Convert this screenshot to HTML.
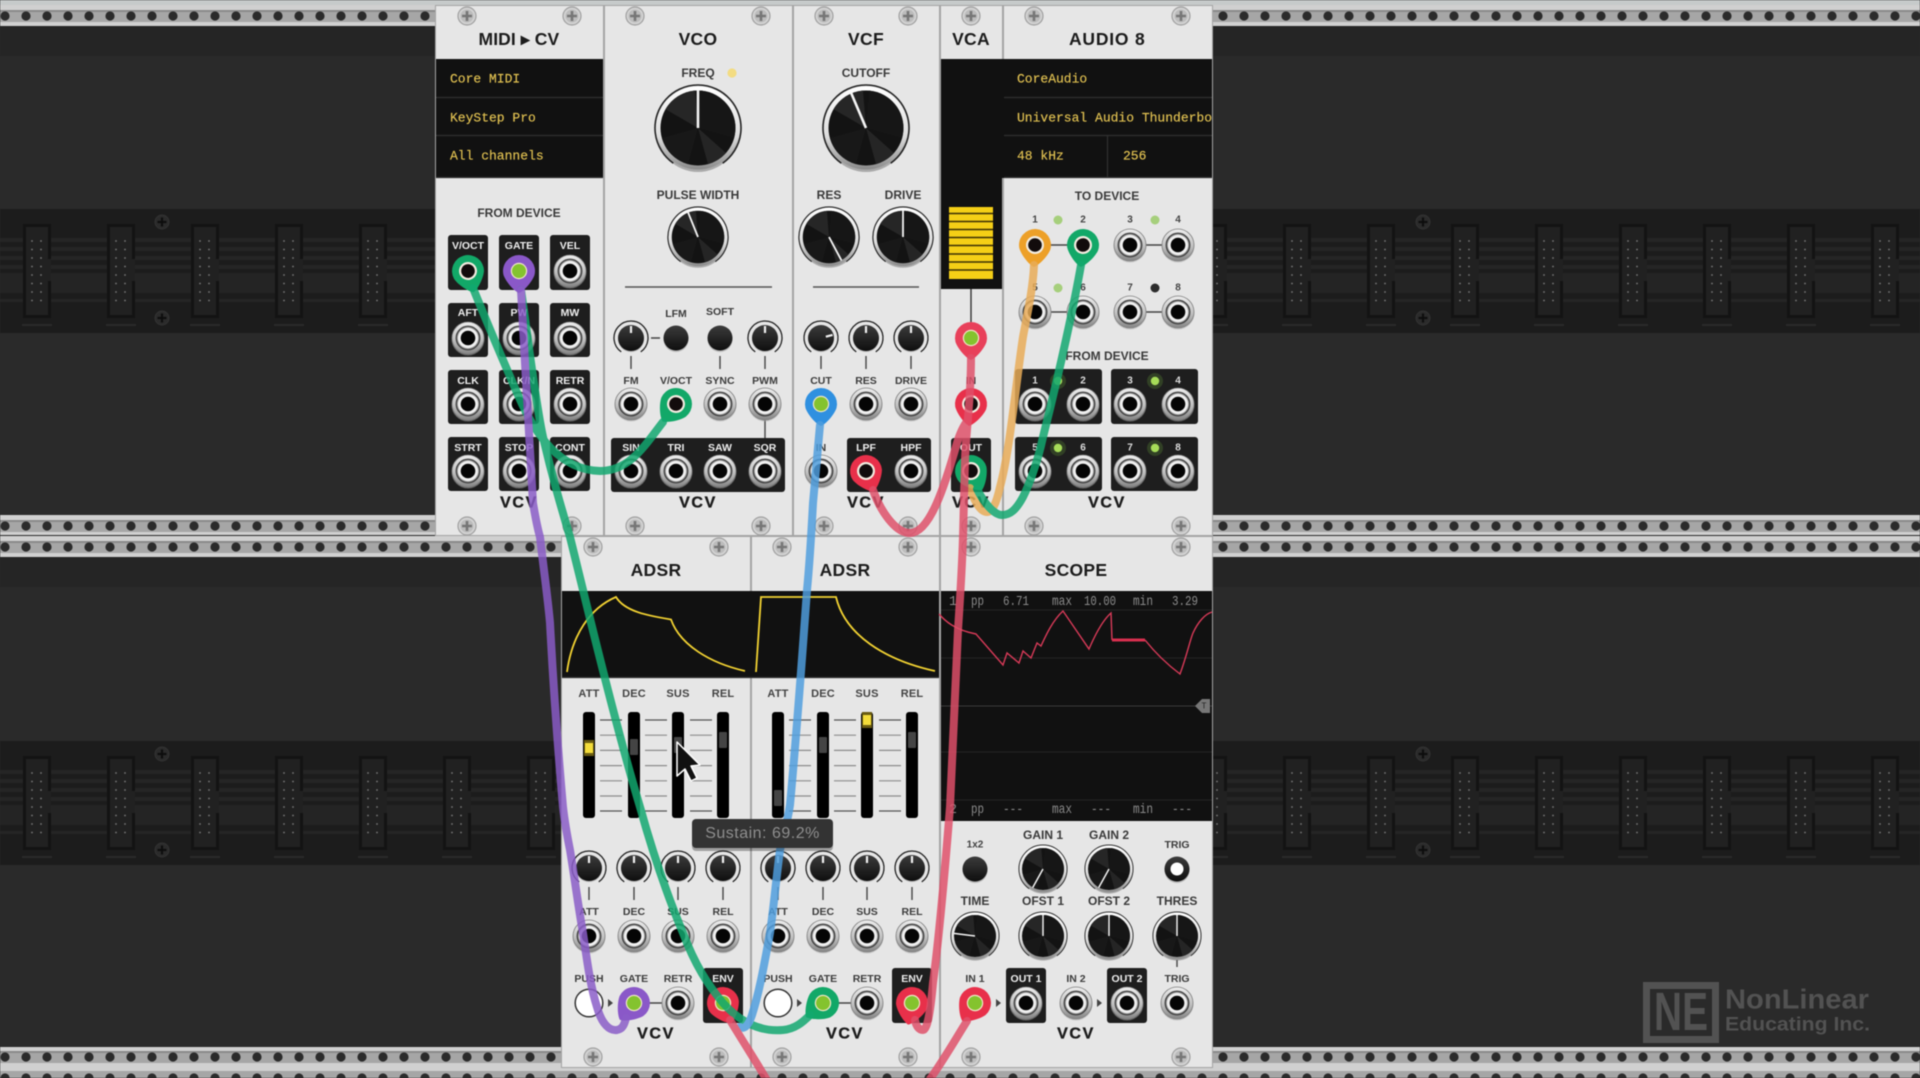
<!DOCTYPE html>
<html><head><meta charset="utf-8"><title>VCV Rack</title>
<style>
html,body{margin:0;padding:0;background:#2a2a2a;overflow:hidden}
svg{display:block;filter:blur(.45px)}
text{font-family:"Liberation Sans",sans-serif;dominant-baseline:central;text-anchor:middle}
.t{font-size:17.5px;font-weight:bold;fill:#1c1c1c;letter-spacing:.3px}
.b{font-size:12px;font-weight:bold;fill:#3a3a3a}
.l{font-size:10.5px;font-weight:bold;fill:#3c3c3c}
.a{font-size:11px;font-weight:bold;fill:#444;letter-spacing:.2px}
.w{font-size:10.5px;font-weight:bold;fill:#eee}
.n{font-size:10px;font-weight:bold;fill:#444}
.nw{font-size:10px;font-weight:bold;fill:#ddd}
.v{font-size:16px;font-weight:bold;fill:#1c1c1c;letter-spacing:1.6px;stroke:#1c1c1c;stroke-width:.35px}
.m{font-family:"Liberation Mono",monospace;font-size:13px;fill:#e2c252;stroke:#e2c252;stroke-width:.15px;text-anchor:start}
.s{font-family:"Liberation Mono",monospace;font-size:14px;fill:#8a8a8a;text-anchor:start}
.c{fill:none;stroke-width:8;stroke-linecap:round;stroke-linejoin:round}
</style></head><body>
<svg width="1920" height="1078" viewBox="0 0 1920 1078" xmlns="http://www.w3.org/2000/svg">
<defs>
<clipPath id="audioclip"><rect x="1004" y="59" width="208" height="119"/></clipPath>
<pattern id="holes" width="21" height="531" patternUnits="userSpaceOnUse"><circle cx="5" cy="16" r="4.6" fill="#2b2b2b"/><circle cx="5" cy="526" r="4.6" fill="#2b2b2b"/></pattern>
<pattern id="conn" x="0" y="209" width="84" height="124" patternUnits="userSpaceOnUse">
<rect x="23" y="15" width="28" height="94" fill="#131313"/><rect x="26" y="18" width="22" height="88" fill="#212121"/><rect x="47" y="50" width="4" height="22" fill="#212121"/><rect x="22" y="115" width="30" height="2" fill="#2a2a2a"/>
<g fill="#7c7c7c"><circle cx="32" cy="32" r=".85"/><circle cx="41" cy="32" r=".85"/><circle cx="32" cy="40.500" r=".85"/><circle cx="41" cy="40.500" r=".85"/><circle cx="32" cy="49" r=".85"/><circle cx="41" cy="49" r=".85"/><circle cx="32" cy="57.500" r=".85"/><circle cx="41" cy="57.500" r=".85"/><circle cx="32" cy="66" r=".85"/><circle cx="41" cy="66" r=".85"/><circle cx="32" cy="74.500" r=".85"/><circle cx="41" cy="74.500" r=".85"/><circle cx="32" cy="83" r=".85"/><circle cx="41" cy="83" r=".85"/><circle cx="32" cy="91.500" r=".85"/><circle cx="41" cy="91.500" r=".85"/></g>
</pattern>
<linearGradient id="gj" x1="0" y1="0" x2="0" y2="1"><stop offset="0" stop-color="#eeeeee"/><stop offset=".55" stop-color="#c0c0c0"/><stop offset="1" stop-color="#858585"/></linearGradient>
<linearGradient id="gk" x1="0" y1="0" x2="0" y2="1"><stop offset="0" stop-color="#ffffff"/><stop offset=".6" stop-color="#dddddd"/><stop offset="1" stop-color="#8a8a8a"/></linearGradient>
<linearGradient id="gb" x1="0" y1="0" x2="0" y2="1"><stop offset="0" stop-color="#3c3c3c"/><stop offset="1" stop-color="#0e0e0e"/></linearGradient>
<g id="s"><circle r="9" fill="#d2d2d2" stroke="#a0a0a0" stroke-width="1.2"/><circle r="6.5" fill="#bcbcbc"/><path d="M-5 0H5M0-5V5" stroke="#767676" stroke-width="2.6"/></g>
<g id="sd"><circle r="7" fill="#2b2b2b" stroke="#333" stroke-width="1"/><path d="M-4.500 0H4.500M0-4.500V4.500" stroke="#0e0e0e" stroke-width="2.2"/></g>
<g id="j"><circle r="16.500" cy="1" fill="#a9a9a9" opacity=".5"/><circle r="16" fill="url(#gj)" stroke="#808080" stroke-width=".8"/><circle r="11.800" fill="#8e8e8e" stroke="#3c3c3c" stroke-width="1.2"/><circle r="10.200" fill="#f0f0f0"/><circle r="7.300" fill="#050505"/></g>
<g id="k"><circle r="41" cy="3" fill="#aaa"/><path d="M-24.700 35.200A43 43 0 1 1 24.700 35.200" fill="none" stroke="#222" stroke-width="1.6"/><circle r="41.500" fill="url(#gk)"/><circle r="37.500" fill="#131313"/><path d="M0 0L-32.500-18.700A37.500 37.500 0 0 1-3-37.400Z" fill="#262626"/><path d="M0 0L28 25A37.500 37.500 0 0 1 10 36.100Z" fill="#252525"/><path d="M0 0L36 10A37.500 37.500 0 0 0 3-37.400Z" fill="#161616"/><path d="M0 0L-10 36.100A37.500 37.500 0 0 1-36 10Z" fill="#181818"/></g>
<line id="i" x1="0" y1="0" x2="0" y2="-38" stroke="#f4f4f4" stroke-width="2.6"/>
<g id="ka"><path d="M-9.750 13.900A17 17 0 1 1 9.750 13.900" fill="none" stroke="#222" stroke-width="1.3"/><circle r="13" cy="1" fill="#8f8f8f" opacity=".6"/><circle r="13" fill="url(#gb)"/></g>
<line id="ki" x1="0" y1="-5" x2="0" y2="-12" stroke="#f0f0f0" stroke-width="2.2"/>
<g id="ks"><use href="#ka"/><use href="#ki"/></g>
<g id="btn"><circle r="12.500" cy="1.500" fill="#999" opacity=".6"/><circle r="12.500" fill="url(#gb)"/></g>
<g id="ticks"><path d="M0 720H22M0 811H22" stroke="#555" stroke-width="1.3"/><path d="M0 735.200H22M0 750.400H22M0 765.600H22M0 780.800H22M0 796H22" stroke="#8c8c8c" stroke-width="1.2"/></g>
<path id="drop" d="M-15.500 4A16 16 0 1 1 15.500 4C13 11 5 20 0 22C-5 20-13 11-15.500 4Z" fill="currentColor"/>
<g id="ph"><use href="#drop"/><circle r="9" fill="#f3ece0"/><circle r="6.800" fill="#120c0c"/></g>
<g id="pl"><use href="#drop"/><circle r="8.200" fill="#f0e6c8"/><circle r="7" fill="#84c32e"/></g>
</defs>

<!-- background -->
<rect width="1920" height="1078" fill="#2a2a2a"/>
<rect y="26" width="1920" height="30" fill="#232323" opacity=".7"/>
<rect y="557" width="1920" height="30" fill="#232323" opacity=".7"/>
<g id="band"><rect y="209" width="1920" height="124" fill="#1c1c1c"/>
<rect y="238" width="1920" height="4" fill="#252525"/><rect y="247" width="1920" height="4" fill="#252525"/><rect y="256" width="1920" height="4" fill="#252525"/><rect y="265" width="1920" height="4" fill="#252525"/><rect y="273" width="1920" height="20" fill="#242424"/><rect y="299" width="1920" height="3" fill="#252525"/>
<rect y="209" width="1920" height="124" fill="url(#conn)"/></g>
<use href="#band" y="532"/>
<use href="#sd" x="162" y="222"/><use href="#sd" x="162" y="318"/><use href="#sd" x="1423" y="222"/><use href="#sd" x="1423" y="318"/>
<use href="#sd" x="162" y="754"/><use href="#sd" x="162" y="850"/><use href="#sd" x="1423" y="754"/><use href="#sd" x="1423" y="850"/>

<!-- rails -->
<g>
<rect y="0" width="1920" height="5" fill="#c6caca"/><rect y="5" width="1920" height="21" fill="#d0d0d0"/><rect y="10" width="1920" height="12" fill="#a6a6a6"/><rect y="10" width="1920" height="2" fill="#8a8a8a"/>
<rect y="515" width="1920" height="20" fill="#d0d0d0"/><rect y="520" width="1920" height="12" fill="#a6a6a6"/><rect y="520" width="1920" height="2" fill="#8a8a8a"/>
<rect y="536" width="1920" height="21" fill="#d0d0d0"/><rect y="541" width="1920" height="12" fill="#a6a6a6"/><rect y="541" width="1920" height="2" fill="#8a8a8a"/>
<rect y="1047" width="1920" height="20" fill="#d0d0d0"/><rect y="1051" width="1920" height="12" fill="#a6a6a6"/><rect y="1051" width="1920" height="2" fill="#8a8a8a"/>
<rect y="1067" width="1920" height="11" fill="#d0d0d0"/><rect y="1071" width="1920" height="7" fill="#a6a6a6"/>
<rect width="1920" height="1078" fill="url(#holes)"/>
</g>

<!-- panels -->
<rect x="435" y="5" width="778" height="531" fill="#a4a4a4"/>
<rect x="561" y="536" width="652" height="532" fill="#a4a4a4"/>
<g fill="#e6e6e6"><rect x="436" y="6" width="167" height="529"/><rect x="605" y="6" width="187" height="529"/><rect x="794" y="6" width="145" height="529"/><rect x="941" y="6" width="61" height="529"/><rect x="1004" y="6" width="208" height="529"/>
<rect x="562" y="537" width="188" height="530"/><rect x="752" y="537" width="187" height="530"/><rect x="941" y="537" width="271" height="530"/></g>

<!-- displays -->
<g fill="#111"><rect x="436" y="59" width="167" height="119"/><rect x="941" y="59" width="271" height="119"/><rect x="941" y="178" width="61" height="111"/><rect x="562" y="591" width="377" height="87"/><rect x="941" y="591" width="271" height="230"/></g>
<path d="M436 97.500H603M436 135.500H603M1004 97.500H1212M1004 135.500H1212M1107.500 135V178M436 177.500H603M1004 177.500H1212M562 677.500H939" stroke="#303030" stroke-width="1.2"/>
<text class="m" x="450" y="79">Core MIDI</text><text class="m" x="450" y="118">KeyStep Pro</text><text class="m" x="450" y="156">All channels</text>
<g clip-path="url(#audioclip)"><text class="m" x="1017" y="79">CoreAudio</text><text class="m" x="1017" y="118">Universal Audio Thunderbolt</text><text class="m" x="1017" y="156">48 kHz</text><text class="m" x="1123" y="156">256</text></g>

<!-- titles -->
<text class="t" x="519" y="39" textLength="81">MIDI ▸ CV</text><text class="t" x="698" y="39">VCO</text><text class="t" x="866" y="39">VCF</text><text class="t" x="971" y="39">VCA</text><text class="t" x="1107" y="39" textLength="76">AUDIO 8</text>
<text class="t" x="656" y="570">ADSR</text><text class="t" x="845" y="570">ADSR</text><text class="t" x="1076" y="570">SCOPE</text>

<!-- screws -->
<g>
<use href="#s" x="467" y="16"/><use href="#s" x="572" y="16"/><use href="#s" x="635" y="16"/><use href="#s" x="761" y="16"/><use href="#s" x="824" y="16"/><use href="#s" x="908" y="16"/><use href="#s" x="971" y="16"/><use href="#s" x="1034" y="16"/><use href="#s" x="1181" y="16"/>
<use href="#s" x="467" y="526"/><use href="#s" x="572" y="526"/><use href="#s" x="635" y="526"/><use href="#s" x="761" y="526"/><use href="#s" x="824" y="526"/><use href="#s" x="908" y="526"/><use href="#s" x="971" y="526"/><use href="#s" x="1034" y="526"/><use href="#s" x="1181" y="526"/>
<use href="#s" x="593" y="547"/><use href="#s" x="719" y="547"/><use href="#s" x="782" y="547"/><use href="#s" x="908" y="547"/><use href="#s" x="971" y="547"/><use href="#s" x="1181" y="547"/>
<use href="#s" x="593" y="1057"/><use href="#s" x="719" y="1057"/><use href="#s" x="782" y="1057"/><use href="#s" x="908" y="1057"/><use href="#s" x="971" y="1057"/><use href="#s" x="1181" y="1057"/>
</g>

<!-- dark boxes -->
<g fill="#1e1e1e">
<rect x="448" y="235" width="40" height="55" rx="3"/><rect x="499" y="235" width="40" height="55" rx="3"/><rect x="550" y="235" width="40" height="55" rx="3"/>
<rect x="448" y="303" width="40" height="54" rx="3"/><rect x="499" y="303" width="40" height="54" rx="3"/><rect x="550" y="303" width="40" height="54" rx="3"/>
<rect x="448" y="370" width="40" height="54" rx="3"/><rect x="499" y="370" width="40" height="54" rx="3"/><rect x="550" y="370" width="40" height="54" rx="3"/>
<rect x="448" y="437" width="40" height="54" rx="3"/><rect x="499" y="437" width="40" height="54" rx="3"/><rect x="550" y="437" width="40" height="54" rx="3"/>
<rect x="611" y="438" width="174" height="54" rx="3"/><rect x="847" y="438" width="84" height="54" rx="3"/><rect x="951" y="438" width="40" height="54" rx="3"/>
<rect x="1015" y="369" width="87" height="55" rx="3"/><rect x="1111" y="369" width="87" height="55" rx="3"/><rect x="1015" y="437" width="87" height="54" rx="3"/><rect x="1111" y="437" width="87" height="54" rx="3"/>
<rect x="703" y="968" width="40" height="55" rx="3"/><rect x="892" y="968" width="40" height="55" rx="3"/><rect x="1006" y="968" width="40" height="55" rx="3"/><rect x="1107" y="968" width="40" height="55" rx="3"/>
</g>

<!-- MIDI labels -->
<text class="b" x="519" y="213">FROM DEVICE</text>
<g><text class="w" x="468" y="246">V/OCT</text><text class="w" x="519" y="246">GATE</text><text class="w" x="570" y="246">VEL</text>
<text class="w" x="468" y="313">AFT</text><text class="w" x="519" y="313">PW</text><text class="w" x="570" y="313">MW</text>
<text class="w" x="468" y="381">CLK</text><text class="w" x="519" y="381">CLK/N</text><text class="w" x="570" y="381">RETR</text>
<text class="w" x="468" y="448">STRT</text><text class="w" x="519" y="448">STOP</text><text class="w" x="570" y="448">CONT</text></g>
<text class="v" x="519" y="503">VCV</text>

<!-- VCO -->
<text class="b" x="698" y="73">FREQ</text><circle cx="732" cy="73" r="4.600" fill="#f3dc82"/>
<g transform="translate(698 128)"><use href="#k"/><use href="#i"/></g>
<text class="b" x="698" y="195">PULSE WIDTH</text>
<g transform="translate(698 237)"><g transform="scale(.7)"><use href="#k"/><use href="#i" transform="rotate(-22)"/></g></g>
<path d="M625 287H772" stroke="#555" stroke-width="1.4"/>
<path d="M651 338H660M631 356V369M720 356V369M765 356V369M765 420V438" stroke="#444" stroke-width="1.4"/>
<use href="#ks" x="631" y="338"/><use href="#btn" x="676" y="338"/><use href="#btn" x="720" y="338"/><use href="#ks" x="765" y="338"/>
<text class="l" x="676" y="314">LFM</text><text class="l" x="720" y="312">SOFT</text>
<text class="l" x="631" y="381">FM</text><text class="l" x="676" y="381">V/OCT</text><text class="l" x="720" y="381">SYNC</text><text class="l" x="765" y="381">PWM</text>
<text class="w" x="631" y="448">SIN</text><text class="w" x="676" y="448">TRI</text><text class="w" x="720" y="448">SAW</text><text class="w" x="765" y="448">SQR</text>
<text class="v" x="698" y="503">VCV</text>

<!-- VCF -->
<text class="b" x="866" y="73">CUTOFF</text>
<g transform="translate(866 128)"><use href="#k"/><use href="#i" transform="rotate(-23)"/></g>
<text class="b" x="829" y="195">RES</text><text class="b" x="903" y="195">DRIVE</text>
<g transform="translate(829 237) scale(.7)"><use href="#k"/><use href="#i" transform="rotate(152)"/></g>
<g transform="translate(903 237) scale(.7)"><use href="#k"/><use href="#i"/></g>
<path d="M813 287H919" stroke="#555" stroke-width="1.4"/>
<path d="M821 356V369M866 356V369M911 356V369" stroke="#444" stroke-width="1.4"/>
<g transform="translate(821 338)"><use href="#ka"/><use href="#ki" transform="rotate(75)"/></g><use href="#ks" x="866" y="338"/><use href="#ks" x="911" y="338"/>
<text class="l" x="821" y="381">CUT</text><text class="l" x="866" y="381">RES</text><text class="l" x="911" y="381">DRIVE</text>
<text class="l" x="821" y="448">IN</text><text class="w" x="866" y="448">LPF</text><text class="w" x="911" y="448">HPF</text>
<text class="v" x="866" y="503">VCV</text>

<!-- VCA -->
<rect x="949" y="207" width="44" height="72" fill="#f5cf16"/>
<path d="M949 213.500H993M949 221.500H993M949 229.500H993M949 237.500H993M949 245.500H993M949 254H993M949 262H993M949 270H993" stroke="#3a2f05" stroke-width="1.4"/>
<path d="M971 289V322" stroke="#333" stroke-width="1.4"/>
<text class="l" x="971" y="381">IN</text><text class="w" x="971" y="448">OUT</text><text class="v" x="971" y="503">VCV</text>

<!-- AUDIO -->
<text class="b" x="1107" y="196">TO DEVICE</text><text class="b" x="1107" y="356">FROM DEVICE</text>
<text class="n" x="1035" y="220">1</text><text class="n" x="1083" y="220">2</text><text class="n" x="1130" y="220">3</text><text class="n" x="1178" y="220">4</text>
<text class="n" x="1035" y="288">5</text><text class="n" x="1083" y="288">6</text><text class="n" x="1130" y="288">7</text><text class="n" x="1178" y="288">8</text>
<circle cx="1058" cy="220" r="4.500" fill="#a6cf7c"/><circle cx="1155" cy="220" r="4.500" fill="#a6cf7c"/><circle cx="1058" cy="288" r="4.500" fill="#a6cf7c"/><circle cx="1155" cy="288" r="4.500" fill="#2c2c2c"/>
<path d="M1035 245H1083M1130 245H1178M1035 312H1083M1130 312H1178" stroke="#444" stroke-width="1.4"/>
<text class="nw" x="1035" y="381">1</text><text class="nw" x="1083" y="381">2</text><text class="nw" x="1130" y="381">3</text><text class="nw" x="1178" y="381">4</text>
<text class="nw" x="1035" y="448">5</text><text class="nw" x="1083" y="448">6</text><text class="nw" x="1130" y="448">7</text><text class="nw" x="1178" y="448">8</text>
<circle cx="1058" cy="381" r="8" fill="#6aa83a" opacity=".25"/><circle cx="1155" cy="381" r="8" fill="#6aa83a" opacity=".25"/><circle cx="1058" cy="448" r="8" fill="#6aa83a" opacity=".25"/><circle cx="1155" cy="448" r="8" fill="#6aa83a" opacity=".25"/>
<circle cx="1058" cy="381" r="4.200" fill="#a6dc58"/><circle cx="1155" cy="381" r="4.200" fill="#a6dc58"/><circle cx="1058" cy="448" r="4.200" fill="#a6dc58"/><circle cx="1155" cy="448" r="4.200" fill="#a6dc58"/>
<text class="v" x="1107" y="503">VCV</text>

<!-- ADSR displays -->
<path d="M567 672C572 635 590 608 616 597C625 612 650 616 671 619.500C680 645 710 663 745 671" fill="none" stroke="#f2d232" stroke-width="1.8"/>
<path d="M756 672L761 597H836C845 635 885 660 935 671" fill="none" stroke="#f2d232" stroke-width="1.8"/>
<text class="a" x="589" y="694">ATT</text><text class="a" x="634" y="694">DEC</text><text class="a" x="678" y="694">SUS</text><text class="a" x="723" y="694">REL</text>
<text class="a" x="778" y="694">ATT</text><text class="a" x="823" y="694">DEC</text><text class="a" x="867" y="694">SUS</text><text class="a" x="912" y="694">REL</text>
<use href="#ticks" x="600"/><use href="#ticks" x="645"/><use href="#ticks" x="690"/><use href="#ticks" x="789"/><use href="#ticks" x="834"/><use href="#ticks" x="879"/>
<g fill="#000"><rect x="583" y="712" width="12" height="106" rx="3"/><rect x="628" y="712" width="12" height="106" rx="3"/><rect x="672" y="712" width="12" height="106" rx="3"/><rect x="717" y="712" width="12" height="106" rx="3"/><rect x="772" y="712" width="12" height="106" rx="3"/><rect x="817" y="712" width="12" height="106" rx="3"/><rect x="861" y="712" width="12" height="106" rx="3"/><rect x="906" y="712" width="12" height="106" rx="3"/></g>
<g fill="#444"><rect x="630" y="739" width="8" height="16" rx="1"/><rect x="674" y="737" width="8" height="16" rx="1"/><rect x="719" y="732" width="8" height="16" rx="1"/><rect x="774" y="790" width="8" height="16" rx="1"/><rect x="819" y="737" width="8" height="16" rx="1"/><rect x="908" y="732" width="8" height="16" rx="1"/></g>
<rect x="584" y="740" width="10" height="16" fill="#6a5c12"/><rect x="585" y="743" width="8" height="10" fill="#f3dc3a"/>
<rect x="862" y="712" width="10" height="16" fill="#6a5c12"/><rect x="863" y="715" width="8" height="10" fill="#f3dc3a"/>
<path d="M589 887V900M634 887V900M678 887V900M723 887V900M778 887V900M823 887V900M867 887V900M912 887V900M634 1003H678M823 1003H867" stroke="#444" stroke-width="1.4"/>
<use href="#ks" x="589" y="868"/><use href="#ks" x="634" y="868"/><use href="#ks" x="678" y="868"/><use href="#ks" x="723" y="868"/><use href="#ks" x="778" y="868"/><use href="#ks" x="823" y="868"/><use href="#ks" x="867" y="868"/><use href="#ks" x="912" y="868"/>
<text class="l" x="589" y="912">ATT</text><text class="l" x="634" y="912">DEC</text><text class="l" x="678" y="912">SUS</text><text class="l" x="723" y="912">REL</text>
<text class="l" x="778" y="912">ATT</text><text class="l" x="823" y="912">DEC</text><text class="l" x="867" y="912">SUS</text><text class="l" x="912" y="912">REL</text>
<text class="l" x="589" y="979">PUSH</text><text class="l" x="634" y="979">GATE</text><text class="l" x="678" y="979">RETR</text><text class="w" x="723" y="979">ENV</text>
<text class="l" x="778" y="979">PUSH</text><text class="l" x="823" y="979">GATE</text><text class="l" x="867" y="979">RETR</text><text class="w" x="912" y="979">ENV</text>
<circle cx="589" cy="1003" r="13.800" fill="#fff" stroke="#333" stroke-width="1.5"/><circle cx="778" cy="1003" r="13.800" fill="#fff" stroke="#333" stroke-width="1.5"/>
<path d="M608 999L613 1003L608 1007ZM797 999L802 1003L797 1007ZM996 999L1001 1003L996 1007ZM1097 999L1102 1003L1097 1007Z" fill="#444"/>
<text class="v" x="656" y="1034">VCV</text><text class="v" x="845" y="1034">VCV</text>

<!-- Scope display -->
<path d="M941 610H1212M941 658H1212M941 752H1212M941 800H1212" stroke="#262626" stroke-width="1"/>
<path d="M941 706H1212" stroke="#3a3a3a" stroke-width="1"/>
<path d="M1195 706L1202 699H1210V713H1202Z" fill="#777"/><text x="1204" y="706" style="font-size:8px;fill:#222">T</text>
<text class="s" x="949" y="602" textLength="8" lengthAdjust="spacingAndGlyphs">1</text><text class="s" x="971" y="602" textLength="13" lengthAdjust="spacingAndGlyphs">pp</text><text class="s" x="1003" y="602" textLength="26" lengthAdjust="spacingAndGlyphs">6.71</text><text class="s" x="1052" y="602" textLength="20" lengthAdjust="spacingAndGlyphs">max</text><text class="s" x="1084" y="602" textLength="32" lengthAdjust="spacingAndGlyphs">10.00</text><text class="s" x="1133" y="602" textLength="20" lengthAdjust="spacingAndGlyphs">min</text><text class="s" x="1172" y="602" textLength="26" lengthAdjust="spacingAndGlyphs">3.29</text>
<text class="s" x="949" y="810" textLength="8" lengthAdjust="spacingAndGlyphs">2</text><text class="s" x="971" y="810" textLength="13" lengthAdjust="spacingAndGlyphs">pp</text><text class="s" x="1003" y="810" textLength="20" lengthAdjust="spacingAndGlyphs">---</text><text class="s" x="1052" y="810" textLength="20" lengthAdjust="spacingAndGlyphs">max</text><text class="s" x="1091" y="810" textLength="20" lengthAdjust="spacingAndGlyphs">---</text><text class="s" x="1133" y="810" textLength="20" lengthAdjust="spacingAndGlyphs">min</text><text class="s" x="1172" y="810" textLength="20" lengthAdjust="spacingAndGlyphs">---</text>
<path d="M939 614C945 621 955 630 976 634L1003 665L1007 653L1019 663L1023 651L1031 658L1037 643L1041 646C1046 635 1053 620 1063 611L1089 649C1095 635 1103 620 1111 613L1112 640" fill="none" stroke="#d83a58" stroke-width="1.4"/>
<path d="M1112 640H1145" fill="none" stroke="#d8304e" stroke-width="3"/>
<path d="M1145 640C1157 655 1168 665 1180 674C1187 655 1190 640 1193 633C1198 622 1205 614 1212 612" fill="none" stroke="#d83a58" stroke-width="1.4"/>

<!-- Scope panel -->
<text class="n" x="975" y="845">1x2</text><text class="b" x="1043" y="835">GAIN 1</text><text class="b" x="1109" y="835">GAIN 2</text><text class="l" x="1177" y="845">TRIG</text>
<use href="#btn" x="975" y="869"/>
<g transform="translate(1043 869) scale(.56)"><use href="#k"/><use href="#i" transform="rotate(209)"/></g>
<g transform="translate(1109 869) scale(.56)"><use href="#k"/><use href="#i" transform="rotate(209)"/></g>
<use href="#btn" x="1177" y="869"/><circle cx="1177" cy="869" r="6.500" fill="#fff"/>
<text class="b" x="975" y="901">TIME</text><text class="b" x="1043" y="901">OFST 1</text><text class="b" x="1109" y="901">OFST 2</text><text class="b" x="1177" y="901">THRES</text>
<g transform="translate(975 936) scale(.56)"><use href="#k"/><use href="#i" transform="rotate(-83)"/></g>
<g transform="translate(1043 936) scale(.56)"><use href="#k"/><use href="#i"/></g>
<g transform="translate(1109 936) scale(.56)"><use href="#k"/><use href="#i"/></g>
<g transform="translate(1177 936) scale(.56)"><use href="#k"/><use href="#i"/></g>
<path d="M1177 960V967" stroke="#444" stroke-width="1.4"/>
<text class="l" x="975" y="979">IN 1</text><text class="w" x="1026" y="979">OUT 1</text><text class="l" x="1076" y="979">IN 2</text><text class="w" x="1127" y="979">OUT 2</text><text class="l" x="1177" y="979">TRIG</text>
<text class="v" x="1076" y="1034">VCV</text>

<!-- jacks -->
<g>
<use href="#j" x="570" y="271"/>
<use href="#j" x="468" y="338"/><use href="#j" x="519" y="338"/><use href="#j" x="570" y="338"/>
<use href="#j" x="468" y="404"/><use href="#j" x="519" y="404"/><use href="#j" x="570" y="404"/>
<use href="#j" x="468" y="471"/><use href="#j" x="519" y="471"/><use href="#j" x="570" y="471"/>
<use href="#j" x="631" y="404"/><use href="#j" x="720" y="404"/><use href="#j" x="765" y="404"/>
<use href="#j" x="631" y="471"/><use href="#j" x="676" y="471"/><use href="#j" x="720" y="471"/><use href="#j" x="765" y="471"/>
<use href="#j" x="866" y="404"/><use href="#j" x="911" y="404"/><use href="#j" x="821" y="471"/><use href="#j" x="911" y="471"/>
<use href="#j" x="1130" y="245"/><use href="#j" x="1178" y="245"/>
<use href="#j" x="1035" y="312"/><use href="#j" x="1083" y="312"/><use href="#j" x="1130" y="312"/><use href="#j" x="1178" y="312"/>
<use href="#j" x="1035" y="404"/><use href="#j" x="1083" y="404"/><use href="#j" x="1130" y="404"/><use href="#j" x="1178" y="404"/>
<use href="#j" x="1035" y="471"/><use href="#j" x="1083" y="471"/><use href="#j" x="1130" y="471"/><use href="#j" x="1178" y="471"/>
<use href="#j" x="589" y="936"/><use href="#j" x="634" y="936"/><use href="#j" x="678" y="936"/><use href="#j" x="723" y="936"/>
<use href="#j" x="778" y="936"/><use href="#j" x="823" y="936"/><use href="#j" x="867" y="936"/><use href="#j" x="912" y="936"/>
<use href="#j" x="678" y="1003"/><use href="#j" x="867" y="1003"/>
<use href="#j" x="1026" y="1003"/><use href="#j" x="1076" y="1003"/><use href="#j" x="1127" y="1003"/><use href="#j" x="1177" y="1003"/>
</g>

<!-- plugs -->
<use href="#ph" color="#12a868" transform="translate(468 271) rotate(-15)"/>
<use href="#pl" color="#8a58c8" transform="translate(519 271)"/>
<use href="#ph" color="#12a868" transform="translate(676 404) rotate(38)"/>
<use href="#pl" color="#2f90e0" transform="translate(821 404)"/>
<use href="#ph" color="#e8304a" transform="translate(866 471) rotate(-20)"/>
<use href="#pl" color="#e8405a" transform="translate(971 338)"/>
<use href="#ph" color="#e8304a" transform="translate(971 404) rotate(5)"/>
<use href="#ph" color="#12a868" transform="translate(971 471) rotate(-30)"/>
<use href="#ph" color="#eda028" transform="translate(1035 245) rotate(3)"/>
<use href="#ph" color="#12a868" transform="translate(1083 245) rotate(6)"/>
<use href="#pl" color="#8a58c8" transform="translate(634 1003) rotate(40)"/>
<use href="#pl" color="#e8304a" transform="translate(723 1003) rotate(-22)"/>
<use href="#pl" color="#12a868" transform="translate(823 1003) rotate(50)"/>
<use href="#pl" color="#e8304a" transform="translate(912 1003) rotate(10)"/>
<use href="#pl" color="#e8304a" transform="translate(975 1003) rotate(35)"/>

<!-- cables -->
<g opacity=".84">
<path class="c" stroke="#e9ac58" d="M1034 265C1033 290 1026 320 1023 337C1015 390 1010 450 1000 487C996 505 992 512 987 512C980 512 974 500 970 488"/>
<path class="c" stroke="#12a86f" d="M473 288C490 330 505 365 518 395C535 435 560 470 600 471C630 471 645 445 663 422"/>
<path class="c" stroke="#12a86f" d="M521 290C527 330 535 400 543 437C553 480 562 510 570 537L583 590C600 660 620 740 640 807C650 843 665 890 683 933C695 965 708 985 723 1003C740 1022 760 1032 783 1030C795 1029 803 1022 810 1015"/>
<path class="c" stroke="#8a5cc8" d="M521 290C525 360 529 440 533 503C535 515 538 530 540 537C545 580 548 600 550 623C553 680 558 750 563 807C565 825 567 835 570 850C575 880 578 905 583 933C587 960 590 985 597 1007C602 1025 610 1031 617 1030C622 1029 624 1026 626 1018"/>
<path class="c" stroke="#4f9ede" d="M820 425L813 503C811 540 809 570 807 590C802 660 796 740 790 805C787 825 783 835 780 850C776 880 774 905 770 933C765 960 760 990 752 1015C749 1024 745 1030 740 1027"/>
<path class="c" stroke="#e0506a" d="M873 490C880 510 895 533 910 533C930 533 945 485 957 443C960 433 964 425 968 420"/>
<path class="c" stroke="#e0506a" d="M971 358C971 400 966 430 965 460L963 537C962 570 960 600 958 630L950 807C945 870 940 930 933 983C931 1005 928 1030 923 1030C919 1030 916 1026 915 1020"/>
<path class="c" stroke="#e0506a" d="M730 1020C742 1040 755 1060 768 1082"/>
<path class="c" stroke="#e0506a" d="M967 1021C955 1040 945 1058 928 1082"/>
<path class="c" stroke="#12a86f" d="M1081 265C1075 300 1060 370 1043 437C1037 465 1028 487 1023 497C1016 510 1010 515 1002 515C995 515 985 505 977 489"/>
</g>

<!-- tooltip -->
<rect x="692" y="819" width="141" height="29" rx="4" fill="#000" opacity=".3" transform="translate(0 3)"/>
<rect x="692" y="819" width="141" height="29" rx="4" fill="#333"/>
<text x="762.500" y="833.500" style="font-size:16px;fill:#8e8e8e;letter-spacing:.5px">Sustain: 69.2%</text>

<!-- cursor -->
<path d="M677 742V776L685 769L691 781L697 778L691 766L700 765Z" fill="#111" stroke="#fff" stroke-width="1.5" stroke-linejoin="round"/>

<!-- watermark -->
<rect x="1643" y="982" width="76" height="61" fill="#525252"/><rect x="1650" y="989" width="62" height="47" fill="#2a2a2a"/>
<text x="1654" y="1012" textLength="54" lengthAdjust="spacingAndGlyphs" style="font-size:54px;font-weight:bold;fill:#525252;text-anchor:start">NE</text>
<text x="1725" y="999" textLength="144" lengthAdjust="spacingAndGlyphs" style="font-size:28px;font-weight:bold;fill:#525252;text-anchor:start">NonLinear</text>
<text x="1725" y="1025" textLength="145" lengthAdjust="spacingAndGlyphs" style="font-size:19px;font-weight:bold;fill:#525252;text-anchor:start">Educating Inc.</text>
</svg>
</body></html>
